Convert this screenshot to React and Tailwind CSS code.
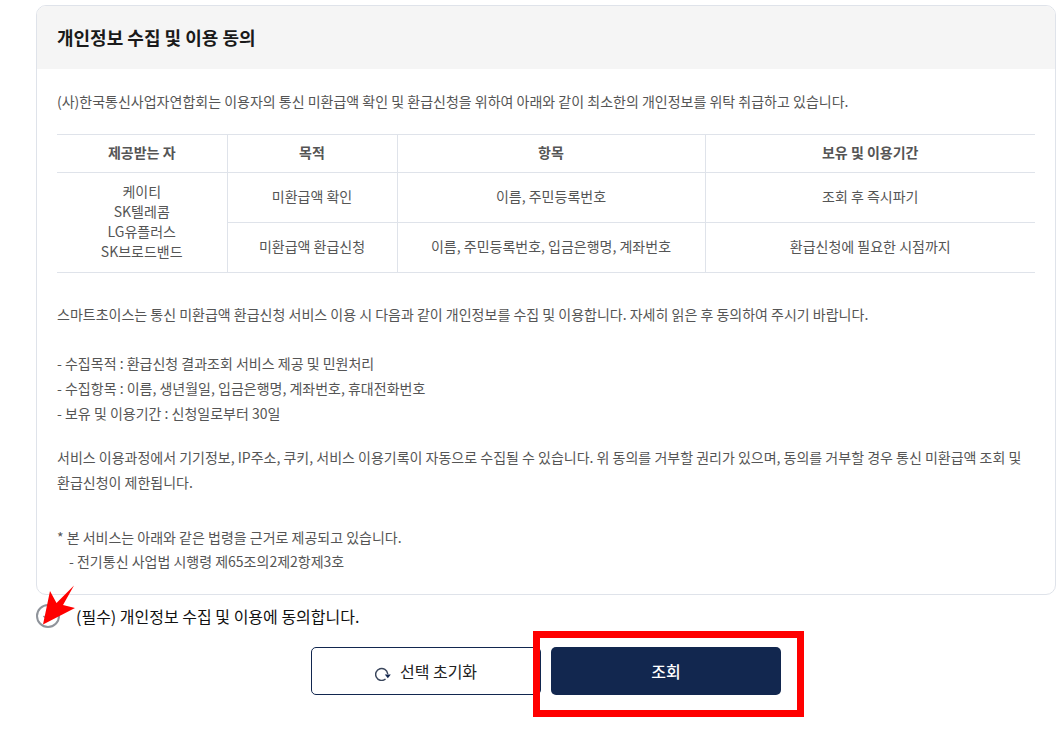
import React from 'react'

const font = { fontFamily: '"Noto Sans CJK KR", "Noto Sans", sans-serif' }

export default function App() {
  return (
    <div className="relative h-[737px] w-[1063px] overflow-hidden bg-white pl-[36px] pr-[7px] pt-[5px]" style={font}>
      <section className="h-[590px] overflow-hidden rounded-[10px] border border-[#dfe3ea] bg-white">
        <h2 className="flex h-[63px] items-center bg-[#f5f5f5] px-5 pb-[1px] text-[18px] font-bold text-[#1a1a1a]">개인정보 수집 및 이용 동의</h2>
        <div className="px-5 pt-[20px] text-[14px] leading-[25px] text-[#555]">
          <p className="h-[25px]">(사)한국통신사업자연합회는 이용자의 통신 미환급액 확인 및 환급신청을 위하여 아래와 같이 최소한의 개인정보를 위탁 취급하고 있습니다.</p>
          <table className="mt-[20px] w-[978px] table-fixed border-collapse text-center text-[14px] leading-[20px] text-[#555]">
            <colgroup>
              <col className="w-[170px]" />
              <col className="w-[170px]" />
              <col className="w-[308px]" />
              <col className="w-[330px]" />
            </colgroup>
            <thead>
              <tr className="h-[38px] border-y border-[#dfe3ea]">
                <th className="border-r border-[#dfe3ea] pb-[4px] font-bold">제공받는 자</th>
                <th className="border-r border-[#dfe3ea] pb-[4px] font-bold">목적</th>
                <th className="border-r border-[#dfe3ea] pb-[4px] font-bold">항목</th>
                <th className="pb-[4px] font-bold">보유 및 이용기간</th>
              </tr>
            </thead>
            <tbody>
              <tr className="h-[50px] border-b border-[#dfe3ea]">
                <td rowSpan={2} className="border-r border-[#dfe3ea] pb-[4px]">케이티<br />SK텔레콤<br />LG유플러스<br />SK브로드밴드</td>
                <td className="border-r border-[#dfe3ea] pb-[4px]">미환급액 확인</td>
                <td className="border-r border-[#dfe3ea] pb-[4px]">이름, 주민등록번호</td>
                <td className="pb-[4px]">조회 후 즉시파기</td>
              </tr>
              <tr className="h-[50px] border-b border-[#dfe3ea]">
                <td className="border-r border-[#dfe3ea] pb-[4px]">미환급액 환급신청</td>
                <td className="border-r border-[#dfe3ea] pb-[4px]">이름, 주민등록번호, 입금은행명, 계좌번호</td>
                <td className="pb-[4px]">환급신청에 필요한 시점까지</td>
              </tr>
            </tbody>
          </table>
          <p className="mt-[29px]">스마트초이스는 통신 미환급액 환급신청 서비스 이용 시 다음과 같이 개인정보를 수집 및 이용합니다. 자세히 읽은 후 동의하여 주시기 바랍니다.</p>
          <ul className="mt-[24px]">
            <li>- 수집목적 : 환급신청 결과조회 서비스 제공 및 민원처리</li>
            <li>- 수집항목 : 이름, 생년월일, 입금은행명, 계좌번호, 휴대전화번호</li>
            <li>- 보유 및 이용기간 : 신청일로부터 30일</li>
          </ul>
          <p className="mt-[19px] leading-[24.5px]">서비스 이용과정에서 기기정보, IP주소, 쿠키, 서비스 이용기록이 자동으로 수집될 수 있습니다. 위 동의를 거부할 권리가 있으며, 동의를 거부할 경우 통신 미환급액 조회 및 환급신청이 제한됩니다.</p>
          <p className="mt-[31px] leading-[24px]">* 본 서비스는 아래와 같은 법령을 근거로 제공되고 있습니다.</p>
          <p className="pl-[12px] leading-[24px]">- 전기통신 사업법 시행령 제65조의2제2항제3호</p>
        </div>
      </section>

      <label className="mt-[9px] flex h-[24px] items-center gap-[16px]">
        <span className="flex h-[24px] w-[24px] items-center justify-center rounded-full border-2 border-[#8f949b] bg-white">
          <svg width="12" height="10" viewBox="0 0 12 10" fill="none">
            <path d="M1.5 5l3 3 6-6.5" stroke="#8a8f96" strokeWidth="1.5" />
          </svg>
        </span>
        <span className="text-[16px] font-normal text-[#111]">(필수) 개인정보 수집 및 이용에 동의합니다.</span>
      </label>

      <div className="mt-[19px] flex w-[1020px] justify-center gap-[10px]">
        <button className="flex h-[48px] w-[230px] items-center justify-center gap-[7px] rounded-[5px] border border-[#12274f] bg-white text-[16px] font-normal text-[#222]">
          <svg width="18" height="18" viewBox="0 0 18 18" fill="none" className="mt-[2px]">
            <path d="M10 16.4A6 6 0 1 1 12.6 10.5" stroke="#3a465c" strokeWidth="1.5" strokeLinecap="round" />
            <path d="M9.8 11.5h6l-3 3.8z" fill="#12274f" />
          </svg>
          선택 초기화
        </button>
        <button className="h-[48px] w-[230px] rounded-[5px] bg-[#12274f] text-[16px] font-medium text-white">조회</button>
      </div>

      {/* annotations drawn over the screenshot */}
      <div className="absolute left-[533px] top-[631px] h-[86px] w-[271px] border-[7px] border-[#ff0000]" />
      <svg className="absolute left-[40px] top-[583px]" width="38" height="44" viewBox="0 0 38 44">
        <path d="M3 41.5 L10 8 L16.5 20 L34 2.5 L23 22 L35 25 Z" fill="#ff0000" />
      </svg>
    </div>
  )
}
